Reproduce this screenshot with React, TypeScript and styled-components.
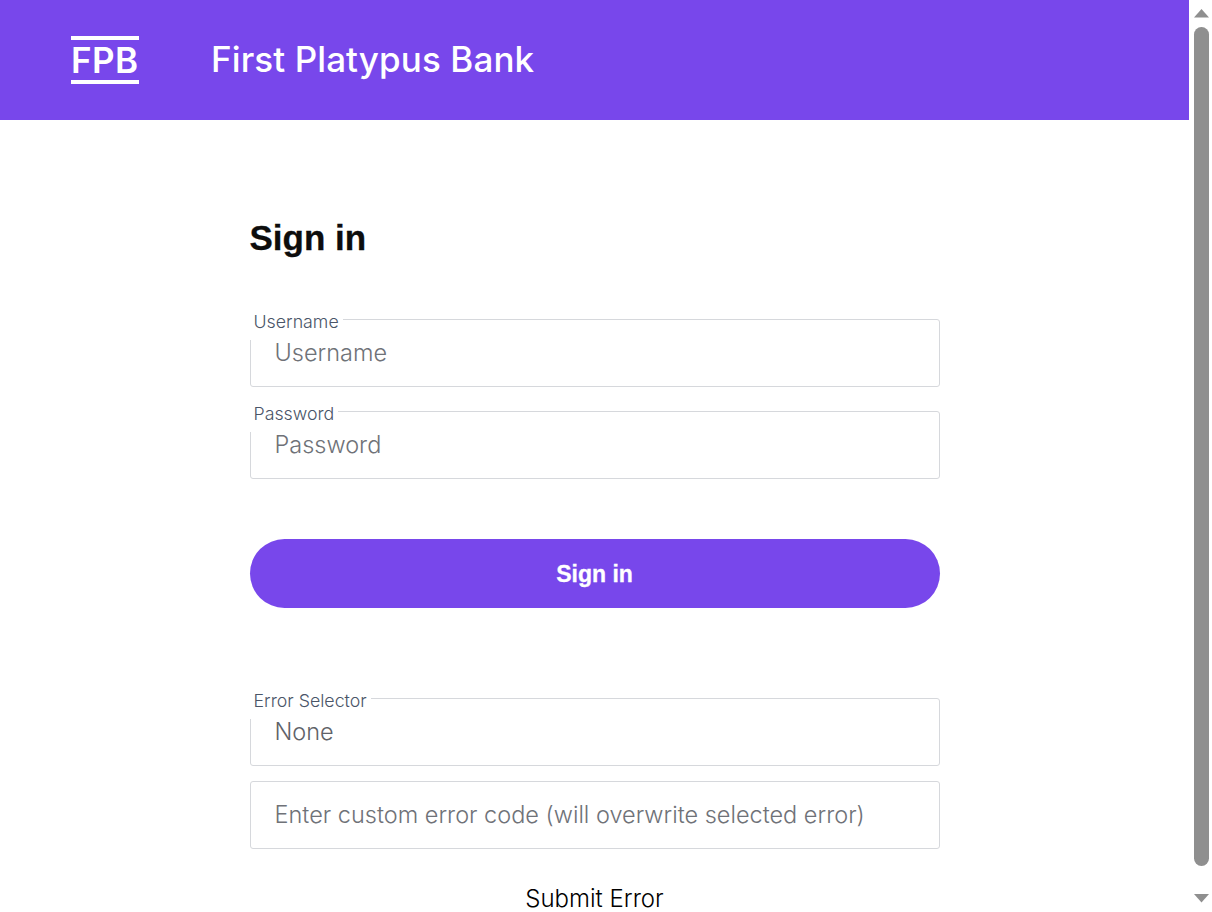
import React from "react";
import styled, { createGlobalStyle } from "styled-components";

const purple = "#7847eb";
const fontStack = 'Inter, "Liberation Sans", Arial, sans-serif';
const boldStack = '"Liberation Sans", Arial, sans-serif';

const GlobalStyle = createGlobalStyle`
  html, body {
    margin: 0;
    height: 912px;
    overflow: hidden;
    background: #fff;
    font-family: ${fontStack};
  }
  * { box-sizing: border-box; }
`;

const Shell = styled.div`
  display: flex;
  width: 1212px;
  height: 912px;
  overflow: hidden;
`;

const Page = styled.div`
  flex: 0 0 1189px;
  height: 912px;
  overflow: hidden;
`;

const Header = styled.header`
  display: flex;
  align-items: center;
  height: 120px;
  padding-left: 71px;
  background: ${purple};
  color: #fff;
`;

const Logo = styled.div`
  width: 68px;
  height: 48px;
  margin-right: 72px;
  border-top: 4px solid #fff;
  border-bottom: 4px solid #fff;
  font-size: 35px;
  font-weight: 600;
  line-height: 40px;
  letter-spacing: 0.4px;
  white-space: nowrap;
`;

const BankName = styled.div`
  padding-bottom: 2px;
  font-size: 35px;
  font-weight: 500;
  line-height: 40px;
  letter-spacing: 0.1px;
  white-space: nowrap;
`;

const Main = styled.main`
  width: 690px;
  margin: 0 auto;
  padding-top: 98px;
`;

const Title = styled.h1`
  margin: 0 0 61px;
  font-family: ${boldStack};
  font-size: 35px;
  font-weight: 700;
  line-height: 40px;
  color: #0d0d0d;
  -webkit-text-stroke: 0.3px #0d0d0d;
`;

const Field = styled.div<{ $gap?: number }>`
  position: relative;
  height: 68px;
  margin-bottom: ${(p) => p.$gap ?? 24}px;
`;

const FieldLabel = styled.label`
  position: absolute;
  top: -8px;
  left: 0;
  height: 29px;
  padding: 0 4px;
  background: #fff;
  color: #4a5568;
  font-size: 17.8px;
  font-weight: 300;
  line-height: 22px;
`;

const TextInput = styled.input`
  display: block;
  width: 100%;
  height: 68px;
  padding: 0 24px 2px;
  border: 1px solid #d6d8dc;
  border-radius: 3px;
  background: #fff;
  color: #6f7480;
  font-family: ${fontStack};
  font-size: 23.5px;
  font-weight: 300;
  outline: none;

  &::placeholder {
    color: #6f7278;
    opacity: 1;
  }
`;

const SelectInput = styled.select`
  display: block;
  width: 100%;
  height: 68px;
  padding: 0 24px 2px;
  border: 1px solid #d6d8dc;
  border-radius: 3px;
  background: #fff;
  color: #5f6269;
  font-family: ${fontStack};
  font-size: 23.5px;
  font-weight: 300;
  appearance: none;
  outline: none;
`;

const PrimaryButton = styled.button`
  display: block;
  width: 100%;
  height: 69px;
  margin-top: 60px;
  margin-bottom: 90px;
  padding: 2px 0 0;
  border: 0;
  border-radius: 35px;
  background: ${purple};
  color: #fff;
  font-family: ${boldStack};
  font-size: 23px;
  font-weight: 700;
  -webkit-text-stroke: 0.3px #fff;
`;

const TextButton = styled.button`
  display: block;
  margin: 0 auto;
  padding: 0;
  border: 0;
  background: none;
  color: #000;
  font-family: ${fontStack};
  font-size: 24px;
  font-weight: 300;
  line-height: 24px;
`;

const ScrollBar = styled.div`
  display: flex;
  flex: 0 0 23px;
  flex-direction: column;
  align-items: center;
  height: 912px;
  padding-left: 1px;
  background: #fff;
`;

const ArrowBox = styled.div`
  display: flex;
  align-items: center;
  justify-content: center;
  width: 100%;
  height: 27px;
`;

const Thumb = styled.div`
  width: 15px;
  height: 839px;
  margin-bottom: 19px;
  border-radius: 8px;
  background: #8f8f8f;
`;

function ScrollArrow({ down }: { down?: boolean }) {
  return (
    <svg width="15" height="9" viewBox="0 0 15 9">
      <path d={down ? "M0 0H15L7.5 8.5Z" : "M0 8.5H15L7.5 0Z"} fill="#8f8f8f" />
    </svg>
  );
}

export default function App() {
  return (
    <Shell>
      <GlobalStyle />
      <Page>
        <Header>
          <Logo>FPB</Logo>
          <BankName>First Platypus Bank</BankName>
        </Header>
        <Main>
          <Title>Sign in</Title>
          <Field>
            <FieldLabel htmlFor="username">Username</FieldLabel>
            <TextInput id="username" placeholder="Username" />
          </Field>
          <Field>
            <FieldLabel htmlFor="password">Password</FieldLabel>
            <TextInput id="password" type="password" placeholder="Password" />
          </Field>
          <PrimaryButton>Sign in</PrimaryButton>
          <Field $gap={15}>
            <FieldLabel htmlFor="error">Error Selector</FieldLabel>
            <SelectInput id="error" defaultValue="none">
              <option value="none">None</option>
            </SelectInput>
          </Field>
          <Field $gap={38}>
            <TextInput placeholder="Enter custom error code (will overwrite selected error)" />
          </Field>
          <TextButton>Submit Error</TextButton>
        </Main>
      </Page>
      <ScrollBar>
        <ArrowBox>
          <ScrollArrow />
        </ArrowBox>
        <Thumb />
        <ArrowBox>
          <ScrollArrow down />
        </ArrowBox>
      </ScrollBar>
    </Shell>
  );
}
